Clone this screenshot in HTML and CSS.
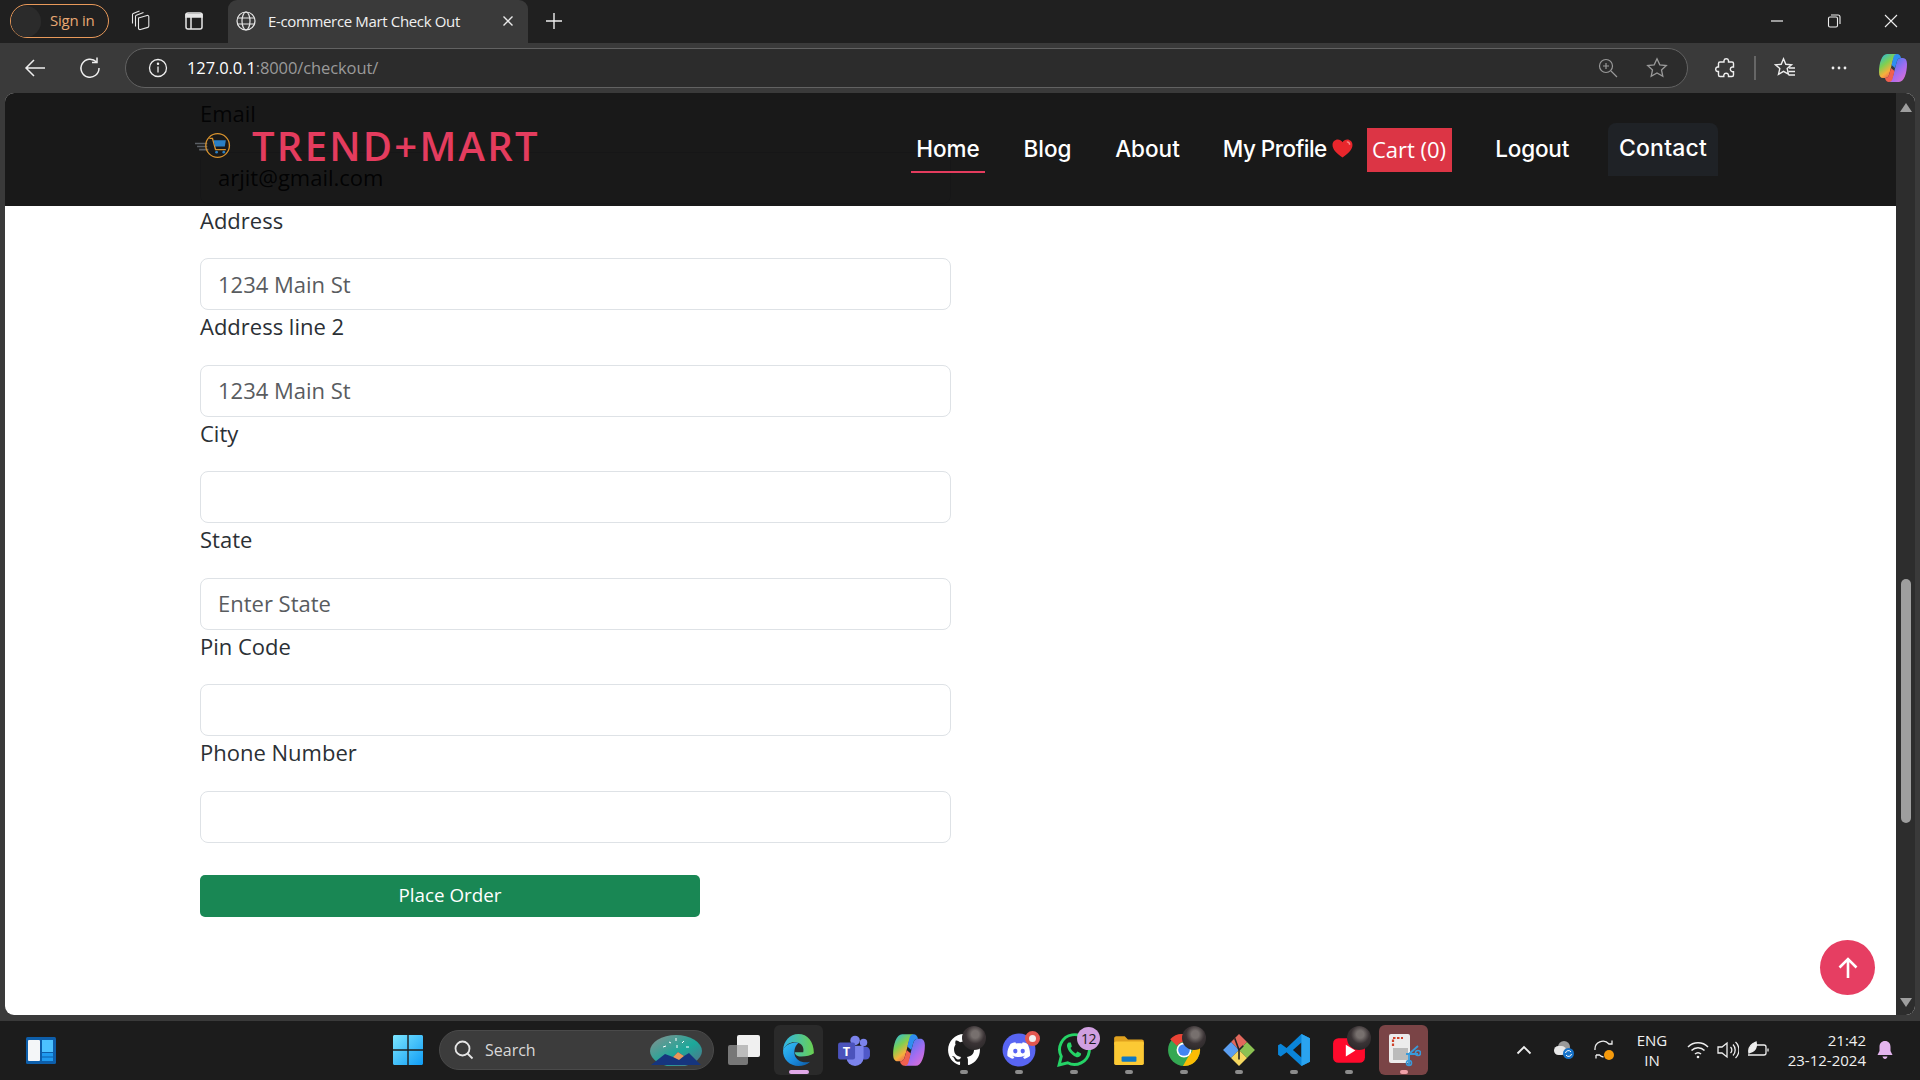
FILE: index.html
```html
<!DOCTYPE html>
<html lang="en">
<head>
<meta charset="utf-8">
<title>E-commerce Mart Check Out</title>
<link rel="stylesheet" href="styles.css">
</head>
<body>
<svg class="defs" width="0" height="0" aria-hidden="true">
  <defs>
    <linearGradient id="gEdge" x1="0" y1="0" x2="1" y2="1"><stop offset="0" stop-color="#35c1f1"/><stop offset=".55" stop-color="#1b8ee0"/><stop offset="1" stop-color="#0c59a4"/></linearGradient>
    <linearGradient id="gEdge2" x1="0" y1="0" x2="1" y2="0"><stop offset="0" stop-color="#2fb5e8"/><stop offset="1" stop-color="#6ad04f"/></linearGradient>
    <linearGradient id="gCop" x1="0" y1="0" x2=".6" y2="1"><stop offset="0" stop-color="#1fb6f0"/><stop offset=".45" stop-color="#7fd050"/><stop offset=".75" stop-color="#f7b03c"/><stop offset="1" stop-color="#ee5a5a"/></linearGradient>
    <linearGradient id="gCop2" x1=".2" y1="0" x2="1" y2="1"><stop offset="0" stop-color="#3a7cf0"/><stop offset=".55" stop-color="#a86cf0"/><stop offset="1" stop-color="#ea70cc"/></linearGradient>
    <linearGradient id="gWin" x1="0" y1="0" x2="1" y2="1"><stop offset="0" stop-color="#7ce6ff"/><stop offset="1" stop-color="#0f9cf5"/></linearGradient>
    <linearGradient id="gSky" x1="0" y1="0" x2="1" y2="1"><stop offset="0" stop-color="#8b8f8e"/><stop offset=".55" stop-color="#1ba89a"/><stop offset="1" stop-color="#5d6a85"/></linearGradient>
  </defs>
</svg>

<div class="tabbar">
  <div class="signin"><span class="avatar"></span><span class="signin-text">Sign in</span></div>
  <svg class="tb-ico ico-coll" viewBox="0 0 24 24" fill="none" stroke="#e6e6e6" stroke-width="1.100"><path d="M9.500 9 18 6.500c1-.3 1.800.3 1.800 1.300V17c0 .7-.4 1.200-1 1.400l-7.300 2.100c-1 .3-2-.3-2-1.300z"/><path d="M6.500 17.500V7.500c0-.6.3-1 .8-1.200L14.500 3.500"/><path d="M3.500 14.500V5.500c0-.5.3-.9.700-1.100L10.500 2"/></svg>
  <svg class="tb-ico ico-vtab" viewBox="0 0 20 20" fill="none" stroke="#e6e6e6" stroke-width="1.500"><rect x="2" y="2" width="16" height="16" rx="2"/><path d="M7 6v12" /><path d="M2 3.500h16v2.500H2z" fill="#e6e6e6"/></svg>
  <div class="tab">
    <svg class="globe" viewBox="0 0 20 20" fill="none" stroke="#e8e8e8" stroke-width="1.200"><circle cx="10" cy="10" r="9"/><ellipse cx="10" cy="10" rx="4" ry="9"/><path d="M1.600 7h16.800M1.600 13h16.800"/></svg>
    <span class="tab-title">E-commerce Mart Check Out</span>
    <svg class="tab-x" viewBox="0 0 12 12" stroke="#eaeaea" stroke-width="1.400"><path d="M1.500 1.500l9 9M10.500 1.500l-9 9"/></svg>
  </div>
  <svg class="tab-plus" viewBox="0 0 18 18" stroke="#eee" stroke-width="1.400"><path d="M9 1v16M1 9h16"/></svg>
  <div class="winctl">
    <svg viewBox="0 0 14 14" stroke="#eee" stroke-width="1.200" fill="none"><path d="M1 7h12"/></svg>
    <svg viewBox="0 0 14 14" stroke="#eee" stroke-width="1.100" fill="none"><rect x="1.500" y="3" width="9" height="10" rx="1.500"/><path d="M4 1h7c1.200 0 2 .8 2 2v7"/></svg>
    <svg viewBox="0 0 14 14" stroke="#eee" stroke-width="1.100" fill="none"><path d="M1 1l12 12M13 1L1 13"/></svg>
  </div>
</div>

<div class="toolbar">
  <svg class="tool-ico ico-back" viewBox="0 0 22 22" fill="none" stroke="#eee" stroke-width="1.500"><path d="M21 11H2M10 3l-8 8 8 8"/></svg>
  <svg class="tool-ico ico-reload" viewBox="0 0 22 22" fill="none" stroke="#eee" stroke-width="1.500"><path d="M17.500 5A9 9 0 1 0 20 11"/><path d="M18 .5V5.500h-5"/></svg>
  <div class="urlbar">
    <svg class="ico-info" viewBox="0 0 20 20" fill="none" stroke="#eee" stroke-width="1.300"><circle cx="10" cy="10" r="8.500"/><path d="M10 8.500v6"/><circle cx="10" cy="5.800" r=".6" fill="#eee"/></svg>
    <span class="url"><span class="url-host">127.0.0.1</span>:8000/checkout/</span>
    <svg class="ico-zoom" viewBox="0 0 20 20" fill="none" stroke="#999" stroke-width="1.200"><circle cx="8" cy="8" r="6.500"/><path d="M8 5v6M5 8h6M13 13l6 6"/></svg>
    <svg class="ico-star" viewBox="0 0 22 22" fill="none" stroke="#999" stroke-width="1.300"><path d="M11 1.800l2.800 6 6.500.7-4.800 4.400 1.300 6.400L11 16l-5.800 3.300 1.300-6.400L1.700 8.500l6.500-.7z"/></svg>
  </div>
  <svg class="tool-ico ico-puzzle" viewBox="0 0 22 22" fill="none" stroke="#eee" stroke-width="1.400"><path d="M9 3.500a2.300 2.300 0 0 1 4.500 0V5h3.500c.8 0 1.500.7 1.500 1.500V10h-1.300a2.400 2.400 0 0 0 0 4.700h1.300v3.300c0 .8-.7 1.500-1.500 1.500h-3.500v-1.300a2.400 2.400 0 0 0-4.700 0v1.300H5c-.8 0-1.500-.7-1.500-1.500v-3.500h-1a2.300 2.300 0 0 1 0-4.500h1V6.500C3.500 5.700 4.200 5 5 5h4z"/></svg>
  <span class="tool-sep"></span>
  <svg class="tool-ico ico-fav" viewBox="0 0 22 22" fill="none" stroke="#eee" stroke-width="1.400"><path d="M9.500 1.800l2.300 5.500 5.700.5-4.300 3.800 1.200 5.600-4.900-2.800-5 2.900 1.300-5.700L1.500 7.800l5.700-.5z" /><path d="M15 11h6M14.500 14.500h6.500M14.500 18h6.500"/></svg>
  <svg class="tool-ico ico-dots" viewBox="0 0 20 20" fill="#eee"><circle cx="4" cy="10" r="1.400"/><circle cx="10" cy="10" r="1.400"/><circle cx="16" cy="10" r="1.400"/></svg>
  <svg class="ico-copilot" viewBox="0 0 28 30"><path d="M8 1h10c-2 1-3 3-4 6l-4 15c-.6 2-2 3-4 3H4c-2.500 0-4-2-4-6C0 10 3 1 8 1z" fill="url(#gCop)"/><path d="M20 29H10c2-1 3-3 4-6l4-15c.6-2 2-3 4-3h2c2.500 0 4 2 4 6 0 9-3 18-8 18z" fill="url(#gCop2)"/><path d="M18 1c2 0 3.500 1.500 4 4-2 0-3.400 1-4 3l-2 7-3.500-3L14.500 4c.4-2 2-3 3.500-3z" fill="#2f8ef0"/><path d="M10 29c-2 0-3.500-1.500-4-4 2 0 3.400-1 4-3l2-7 3.500 3L13.500 26c-.4 2-2 3-3.500 3z" fill="#f0604f"/></svg>
</div>

<main class="viewport">
  <div class="scroller">
    <form class="checkout">
      <label class="flabel">Email</label>
      <input class="finput" type="text" value="arjit@gmail.com">
      <label class="flabel">Address</label>
      <input class="finput" type="text" placeholder="1234 Main St">
      <label class="flabel">Address line 2</label>
      <input class="finput" type="text" placeholder="1234 Main St">
      <label class="flabel">City</label>
      <input class="finput" type="text">
      <label class="flabel">State</label>
      <input class="finput" type="text" placeholder="Enter State">
      <label class="flabel">Pin Code</label>
      <input class="finput" type="text">
      <label class="flabel">Phone Number</label>
      <input class="finput" type="text">
      <button class="place" type="button">Place Order</button>
    </form>
    <div class="scrollbar">
      <span class="sb-up"></span>
      <span class="sb-track"><span class="sb-thumb"></span></span>
      <span class="sb-down"></span>
    </div>
  </div>

  <header class="site-header">
    <a class="logo">
      <svg class="logo-ico" viewBox="0 0 36 28" fill="none">
        <path d="M0 12h12M2 15h10M4 18h9" stroke="#5b6066" stroke-width="1.500"/>
        <circle cx="22" cy="14" r="11.500" stroke="#d9932e" stroke-width="1.300"/>
        <path d="M14 7h3l3 11h10" stroke="#d9932e" stroke-width="1.300"/>
        <path d="M18 9h12l-1 6H19.500z" fill="#2a7fc4"/>
        <circle cx="21" cy="20.500" r="1.300" fill="#2a7fc4"/><circle cx="28" cy="20.500" r="1.300" fill="#2a7fc4"/>
      </svg>
      <span class="logo-text">TREND+MART</span>
    </a>
    <nav class="nav">
      <a class="nav-link w-home is-active">Home</a>
      <a class="nav-link w-blog">Blog</a>
      <a class="nav-link w-about">About</a>
      <a class="nav-link w-profile">My Profile<svg class="heart" viewBox="0 0 22 20"><path d="M11 19.500C5 15 .5 11 .5 6.200 .5 3 3 .5 6 .5c2 0 3.800 1 5 3 1.200-2 3-3 5-3 3 0 5.500 2.500 5.500 5.700C21.500 11 17 15 11 19.500z" fill="#e8262c"/><path d="M15.500 3c1.500 0 3 1.200 3 3" stroke="#f98a8a" stroke-width="1.500" fill="none"/></svg></a>
      <a class="nav-cart">Cart (0)</a>
      <a class="nav-link w-logout">Logout</a>
      <a class="nav-contact">Contact</a>
    </nav>
  </header>

  <button class="to-top" type="button" aria-label="Back to top">
    <svg viewBox="0 0 24 24" fill="none" stroke="#fff" stroke-width="2.600"><path d="M12 22V3M3.500 11.500 12 3l8.500 8.500"/></svg>
  </button>
</main>

<footer class="taskbar">
  <svg class="widget" viewBox="0 0 30 27"><rect width="30" height="27" rx="1.500" fill="#0d5eaa"/><rect x="2" y="3" width="12" height="21" rx="1" fill="#f4f6f8"/><rect x="16" y="3" width="11" height="12" fill="#4cc2ff"/><rect x="16" y="16" width="11" height="3.500" fill="#1f9bf0"/><rect x="16" y="20.500" width="11" height="3.500" fill="#1f9bf0"/></svg>
  <div class="task-center">
    <svg class="winlogo" viewBox="0 0 30 30"><path d="M0 1.500C0 .7.700 0 1.500 0H14.300v14.300H0zM15.700 0h12.800c.8 0 1.500.7 1.500 1.500v12.800H15.700zM0 15.700h14.300V30H1.500C.7 30 0 29.300 0 28.500zM15.700 15.700H30v12.800c0 .8-.7 1.500-1.500 1.500H15.700z" fill="url(#gWin)"/></svg>
    <div class="searchbox">
      <svg class="search-ico" viewBox="0 0 20 20" fill="none" stroke="#e6e6e6" stroke-width="1.800"><circle cx="8.500" cy="8.500" r="7"/><path d="M13.500 13.500l5 5"/></svg>
      <span class="search-text">Search</span>
      <svg class="bing" viewBox="0 0 54 32"><ellipse cx="27" cy="17" rx="26" ry="16" fill="url(#gSky)"/><path d="M2 31 16 20l8 3 5-5 6 4 5-3 12 12z" fill="#16357e"/><path d="M24 23l5-5 6 4-5 4z" fill="#e9985a"/><path d="M20 8l2 1M27 4v3M35 7l-2 2M14 13l3-1M40 13l-3 0M28 11v3" stroke="#fff" stroke-width="1"/></svg>
    </div>
    <svg class="taskview" viewBox="0 0 32 30"><rect x="0" y="10" width="20" height="20" rx="2" fill="#777"/><rect x="9" y="0" width="23" height="22" rx="2" fill="#f0f0f0"/><rect x="9" y="10" width="11" height="12" fill="#bcbcbc"/></svg>

    <div class="slot slot-active">
      <svg viewBox="0 0 32 32"><path d="M30 19C30 8 24 1 15.500 1 7 1 1.500 8 1 16c3-6 8-8 13-7 5 .9 7 5 6 9h-8c0 2 2 4 6 4 5 0 9-1 12-3z" fill="url(#gEdge2)"/><path d="M1 16c-.6 9 6.500 15 14.500 15 4 0 8-1 11-4-7 2-13-1-14.500-6-1-4 0-9 4-12-7-.5-13 2-15 7z" fill="url(#gEdge)"/></svg>
      <span class="pip pip-pink"></span>
    </div>
    <div class="slot">
      <svg viewBox="0 0 32 32"><circle cx="25" cy="9" r="3.500" fill="#7b83eb"/><rect x="19" y="13" width="12" height="12" rx="4" fill="#5059c9"/><circle cx="17" cy="7" r="4.500" fill="#7b83eb"/><path d="M9 12h16v11a8 8 0 0 1-16 0z" fill="#7b83eb"/><rect x="1" y="9" width="16" height="16" rx="2" fill="#4b53bc"/><text class="t-letter" x="9" y="21.500">T</text></svg>
    </div>
    <div class="slot">
      <svg viewBox="0 0 28 30"><path d="M8 1h10c-2 1-3 3-4 6l-4 15c-.6 2-2 3-4 3H4c-2.500 0-4-2-4-6C0 10 3 1 8 1z" fill="url(#gCop)"/><path d="M20 29H10c2-1 3-3 4-6l4-15c.6-2 2-3 4-3h2c2.500 0 4 2 4 6 0 9-3 18-8 18z" fill="url(#gCop2)"/><path d="M18 1c2 0 3.500 1.500 4 4-2 0-3.400 1-4 3l-2 7-3.500-3L14.500 4c.4-2 2-3 3.500-3z" fill="#2f8ef0"/><path d="M10 29c-2 0-3.500-1.500-4-4 2 0 3.400-1 4-3l2-7 3.500 3L13.500 26c-.4 2-2 3-3.500 3z" fill="#f0604f"/></svg>
    </div>
    <div class="slot">
      <svg viewBox="0 0 32 32"><path d="M16 1C7.700 1 1 7.700 1 16c0 6.600 4.300 12.200 10.300 14.200.8.100 1-.3 1-.7v-2.600c-4.200.9-5-2-5-2-.7-1.700-1.700-2.200-1.700-2.200-1.400-.9.100-.9.100-.9 1.500.1 2.300 1.500 2.300 1.500 1.300 2.300 3.500 1.600 4.400 1.200.1-1 .5-1.600 1-2-3.300-.4-6.800-1.700-6.800-7.400 0-1.600.6-3 1.500-4-.2-.4-.7-1.900.1-4 0 0 1.300-.4 4.100 1.500a14 14 0 0 1 7.500 0c2.800-1.900 4.100-1.500 4.100-1.500.8 2.100.3 3.600.1 4 1 1 1.500 2.400 1.500 4 0 5.700-3.500 7-6.800 7.400.5.500 1 1.400 1 2.800v4.100c0 .4.200.8 1 .7C26.700 28.200 31 22.600 31 16 31 7.700 24.300 1 16 1z" fill="#fff"/></svg>
      <span class="face"></span><span class="pip"></span>
    </div>
    <div class="slot">
      <svg viewBox="0 0 32 32"><circle cx="16" cy="16" r="15.500" fill="#5865f2"/><path d="M24 10c-1.500-.7-3-1.200-4.500-1.400l-.6 1.200c-1.900-.3-3.800-.3-5.700 0l-.6-1.200c-1.500.2-3 .7-4.500 1.400-2.600 4-3.400 7.800-3 11.600 1.800 1.400 3.600 2.200 5.400 2.700l1.200-1.800-1.800-.9.400-.3c3.500 1.600 7.300 1.600 10.800 0l.4.300-1.800.9 1.200 1.800c1.800-.5 3.600-1.300 5.400-2.700.5-4.400-.8-8.200-2.300-11.600z" fill="#fff"/><ellipse cx="12.500" cy="17" rx="2" ry="2.200" fill="#5865f2"/><ellipse cx="19.500" cy="17" rx="2" ry="2.200" fill="#5865f2"/></svg>
      <span class="dot-badge"></span><span class="pip"></span>
    </div>
    <div class="slot">
      <svg viewBox="0 0 32 32" fill="none"><path d="M2 30l2-8A14 14 0 1 1 10 28z" stroke="#25d366" stroke-width="2.800"/><path d="M11 9c-1 .5-2 2-1.500 4 1 4 4.500 8 8.500 9.500 2 .7 3.800-.4 4.500-1.800l.2-1.500-3.500-1.700-1.500 1.700c-2-.8-4-2.800-5-5l1.300-1.500L13 9z" fill="#25d366"/></svg>
      <span class="num-badge">12</span><span class="pip"></span>
    </div>
    <div class="slot">
      <svg viewBox="0 0 32 32"><path d="M2 5c0-1 .8-2 2-2h8l3 3h13c1.200 0 2 .8 2 2v3H2z" fill="#e0a11e"/><rect x="2" y="8" width="28" height="22" rx="1.500" fill="#fcc934"/><rect x="9" y="22" width="14" height="5" rx="1" fill="#0f78c4"/></svg>
      <span class="pip"></span>
    </div>
    <div class="slot">
      <svg viewBox="0 0 32 32"><circle cx="16" cy="16" r="15" fill="#34a853"/><path d="M16 1a15 15 0 0 1 13 7.500H16a7.500 7.500 0 0 0-6.500 3.700L3 5.800A15 15 0 0 1 16 1z" fill="#ea4335"/><path d="M29 8.500A15 15 0 0 1 15 31l6.500-11.200A7.500 7.500 0 0 0 22.500 8.500z" fill="#fbbc04"/><circle cx="16" cy="16" r="7" fill="#fff"/><circle cx="16" cy="16" r="5.500" fill="#4285f4"/></svg>
      <span class="face"></span><span class="pip"></span>
    </div>
    <div class="slot">
      <svg viewBox="0 0 32 32"><path d="M16 1l7.500 7.500L16 16 8.500 8.500z" fill="#e2685c"/><path d="M8.500 8.500 16 16l-7.500 7.500L1 16z" fill="#5b9ef0"/><path d="M23.500 8.500 31 16l-7.500 7.500L16 16z" fill="#8cc152"/><path d="M8.500 23.500 16 16l7.500 7.500L16 31z" fill="#f6d860"/><path d="M12 5l4 11 4-4M16 16v9" stroke="#222" stroke-width="1.500" fill="none"/></svg>
      <span class="pip"></span>
    </div>
    <div class="slot">
      <svg viewBox="0 0 32 32"><path d="M23 1l8 4v22l-8 4L9 18l-5.500 4L1 20.500v-9L3.500 10 9 14zM23 9l-8 7 8 7z" fill="#0a85d9"/><path d="M23 1l8 4v22l-8 4z" fill="#2aa3ef"/></svg>
      <span class="pip"></span>
    </div>
    <div class="slot">
      <svg viewBox="0 0 32 32"><rect x="1" y="5" width="30" height="23" rx="5" fill="#ff0a2c"/><path d="M13 11l9 5.500-9 5.500z" fill="#fff"/></svg>
      <span class="face"></span><span class="pip"></span>
    </div>
    <div class="slot slot-snip">
      <svg viewBox="0 0 32 34"><rect x="1" y="1" width="21" height="29" rx="2" fill="#ececec"/><path d="M5 13V5h10" fill="none" stroke="#d0432b" stroke-width="2.200" stroke-dasharray="2.500 1.500"/><rect x="5" y="15" width="15" height="12" fill="#bbb"/><path d="M21 33l0-12 9-8M30 21l-12 0" stroke="#3a9ad9" stroke-width="1.800" fill="none"/><circle cx="21" cy="30" r="2.500" fill="none" stroke="#3a9ad9" stroke-width="1.600"/><circle cx="30" cy="20" r="2.500" fill="none" stroke="#3a9ad9" stroke-width="1.600"/></svg>
      <span class="pip pip-rose"></span>
    </div>
  </div>
  <div class="tray">
    <svg class="tr-chev" viewBox="0 0 16 10" fill="none" stroke="#eee" stroke-width="1.800"><path d="M1.500 8.500 8 2l6.500 6.500"/></svg>
    <svg class="tr-cloud" viewBox="0 0 22 20"><circle cx="11" cy="7" r="6" fill="#9a9a9a"/><rect x="1" y="6" width="12" height="9" rx="4.500" fill="#e8e8e8"/><circle cx="15.500" cy="13.500" r="5.500" fill="#1672c9"/><path d="M12.500 13a3 3 0 0 1 5.500-1M18.500 14a3 3 0 0 1-5.500 1" stroke="#fff" fill="none"/></svg>
    <svg class="tr-sync" viewBox="0 0 22 22" fill="none" stroke="#eee" stroke-width="1.300"><path d="M2 11a8 8 0 0 1 14-6h3M19 1.500V5h-3.500"/><path d="M3 16h3.500a8 8 0 0 0 4 2M3 19.500V16"/><circle cx="16" cy="16" r="5" fill="#f59a0c" stroke="none"/></svg>
    <div class="lang"><span>ENG</span><span>IN</span></div>
    <svg class="tr-wifi" viewBox="0 0 22 18" fill="none" stroke="#eee" stroke-width="1.500"><path d="M1 6a14 14 0 0 1 20 0M4.500 9.500a9 9 0 0 1 13 0M8 13a4.500 4.500 0 0 1 6 0"/><circle cx="11" cy="16" r="1.300" fill="#eee" stroke="none"/></svg>
    <svg class="tr-vol" viewBox="0 0 22 20" fill="none" stroke="#eee" stroke-width="1.300"><path d="M1 7v6h4l5 4V3L5 7z"/><path d="M13.500 7a4 4 0 0 1 0 6M16 4.500a8 8 0 0 1 0 11M18.500 2a11 11 0 0 1 0 16"/></svg>
    <svg class="tr-batt" viewBox="0 0 22 20" fill="none" stroke="#eee" stroke-width="1.300"><path d="M8 5h9c1 0 2 .8 2 2v6c0 1-1 2-2 2H1"/><path d="M21 8.500v3"/><path d="M2 13c-1-5 2-9 7-11 1 4 0 9-5 10z" fill="#eee"/></svg>
    <div class="clock"><span>21:42</span><span>23-12-2024</span></div>
    <svg class="tr-bell" viewBox="0 0 18 20"><path d="M9 1c-3.500 0-5.500 2.500-5.500 6v4L1.500 15h15l-2-4V7C14.500 3.500 12.500 1 9 1z" fill="#e3b4ee"/><path d="M6.500 16.500h5c-.4 1.500-1.300 2.500-2.500 2.500s-2.100-1-2.500-2.500z" fill="#e3b4ee"/></svg>
  </div>
</footer>
</body>
</html>
```

FILE: styles.css
```css
* { box-sizing: border-box; }
html, body { margin: 0; padding: 0; height: 100%; overflow: hidden; }
body {
  width: 1920px; height: 1080px;
  display: flex; flex-direction: column;
  background: #3a3a3a;
  font-family: "Open Sans", "Noto Sans", sans-serif;
}
.defs { position: absolute; }

/* ---- browser chrome ---- */
.tabbar {
  height: 43px; flex: none;
  background: #202020;
  display: flex; align-items: center;
  padding: 0 0 0 10px;
}
.signin {
  width: 99px; height: 34px; border: 1.5px solid #e8995a; border-radius: 17px;
  display: flex; align-items: center; flex: none; margin-bottom: 1px;
}
.avatar { width: 30px; height: 31px; border-radius: 50%; background: #2b2b2b; flex: none; }
.signin-text { margin: 0 0 2px 9px; color: #e8a873; font: 15px "Open Sans", sans-serif; letter-spacing: -.25px; }
.tb-ico { flex: none; margin-bottom: 1px; }
.ico-coll { width: 24px; height: 24px; margin-left: 20px; }
.ico-vtab { width: 20px; height: 20px; margin-left: 31px; }
.tab {
  width: 300px; height: 43px; margin-left: 24px; flex: none;
  background: #3a3a3a; border-radius: 9px 9px 0 0;
  display: flex; align-items: center; padding: 0 14px 1px 8px;
}
.globe { width: 20px; height: 20px; flex: none; }
.tab-title { margin-left: 12px; color: #f0f0f0; font: 15px "Open Sans", sans-serif; letter-spacing: -.35px; white-space: nowrap; flex: 1; }
.tab-x { width: 12px; height: 12px; flex: none; }
.tab-plus { width: 18px; height: 18px; margin-left: 17px; flex: none; margin-bottom: 1px; }
.winctl { margin-left: auto; display: flex; align-items: center; gap: 43px; padding: 0 22px 1px 0; }
.winctl svg { width: 14px; height: 14px; }

.toolbar {
  height: 50px; flex: none;
  background: #3a3a3a;
  display: flex; align-items: center;
  padding: 0 0 0 24px;
}
.tool-ico { flex: none; }
.ico-back { width: 22px; height: 22px; }
.ico-reload { width: 22px; height: 22px; margin-left: 33px; }
.urlbar {
  width: 1563px; height: 40px; margin-left: 24px; flex: none;
  background: #2c2c2c; border: 1.500px solid #626262; border-radius: 20px;
  display: flex; align-items: center; padding: 0 19px 0 22px;
}
.ico-info { width: 20px; height: 20px; flex: none; }
.url { margin: 0 0 2px 19px; font: 16.500px "Open Sans", sans-serif; color: #9a9a9a; letter-spacing: -.1px; flex: 1; }
.url-host { color: #fff; }
.ico-zoom { width: 20px; height: 20px; flex: none; margin-right: 28px; }
.ico-star { width: 22px; height: 22px; flex: none; }
.ico-puzzle { width: 22px; height: 22px; margin-left: 27px; }
.tool-sep { width: 1.500px; height: 24px; background: #666; margin-left: 17px; flex: none; }
.ico-fav { width: 22px; height: 22px; margin-left: 18px; }
.ico-dots { width: 20px; height: 20px; margin-left: 33px; }
.ico-copilot { width: 28px; height: 30px; margin-left: 30px; flex: none; }

/* ---- page viewport ---- */
.viewport {
  position: relative; flex: none;
  height: 922px; margin: 0 5px 6px 5px;
  background: #fff; border-radius: 9px; overflow: hidden;
}
.scroller { display: flex; height: 100%; }
.checkout {
  width: 1891px; flex: none;
  padding: 5px 0 0 195px;
  display: flex; flex-direction: column; align-items: flex-start;
}
.flabel {
  font-size: 22px; line-height: 30px; color: #2b3035;
  margin-bottom: 23.500px;
}
.finput {
  display: block; width: 751px; height: 52px; flex: none; margin-bottom: 1px;
  border: 1.500px solid #dee2e6; border-radius: 8px;
  padding: 0 17px 1px; background: #fff; outline: none;
  font: 22px "Open Sans", sans-serif; color: #212529;
}
.finput::placeholder { color: #595c5f; opacity: 1; }
.place {
  width: 500px; height: 42px; margin-top: 31px;
  background: #198754; border: 0; border-radius: 5px; color: #fff;
  font: 500 18.800px "Open Sans", sans-serif; padding: 0 0 2px;
}
.scrollbar {
  width: 19px; flex: none; background: #2d2d2d;
  display: flex; flex-direction: column; align-items: center;
  padding: 10px 0 8px;
}
.sb-up, .sb-down { width: 0; height: 0; border-left: 6px solid transparent; border-right: 6px solid transparent; flex: none; }
.sb-up { border-bottom: 9px solid #9e9e9e; }
.sb-down { border-top: 9px solid #9e9e9e; }
.sb-track { flex: 1; width: 100%; display: flex; justify-content: center; padding-top: 467px; }
.sb-thumb { width: 10px; height: 244px; background: #9e9e9e; border-radius: 5px; }

.site-header {
  position: absolute; left: 0; top: 0; width: 1891px; height: 113px;
  background: rgba(0, 0, 0, .9);
  display: flex; align-items: center; justify-content: space-between;
  padding: 0 178px 0 190px;
}
.logo { display: flex; align-items: center; margin-top: -8px; }
.logo-ico { width: 37px; height: 29px; margin-top: -1px; flex: none; }
.logo-text {
  margin-left: 20px; color: #e43c5e;
  font: 600 40px/1 "Open Sans", sans-serif; letter-spacing: 2.250px; white-space: nowrap;
}
.nav { display: flex; align-items: center; gap: 34px; }
.nav-link {
  position: relative; display: flex; align-items: center; justify-content: center; height: 53px; padding: 0 0 3px;
  color: #fff; font: 500 22.500px "Inter", sans-serif; white-space: nowrap;
}
.w-home { width: 74px; }
.w-blog { width: 57px; }
.w-about { width: 75px; }
.w-profile { width: 137.500px; letter-spacing: -.5px; }
.w-logout { width: 83.500px; letter-spacing: -.2px; }
.is-active::after { content: ""; position: absolute; left: 0; right: 0; bottom: 3px; height: 2px; background: #e43c5e; }
.heart { width: 21px; height: 19px; margin-left: 5px; flex: none; }
.nav-cart {
  width: 85px; height: 44px; margin: 1px 5px 0 -24px; padding-bottom: 2px;
  display: flex; align-items: center; justify-content: center;
  background: #dc3545; color: #fff; font: 22px "Open Sans", sans-serif; white-space: nowrap;
}
.nav-contact {
  width: 110px; height: 53px; padding-bottom: 3px; border-radius: 8px 8px 0 0; background: #1f2226;
  display: flex; align-items: center; justify-content: center;
  color: #fff; font: 500 23px "Inter", sans-serif; letter-spacing: .2px;
}
.to-top {
  position: absolute; left: 1815px; top: 847px; width: 55px; height: 55px; padding: 0;
  border: 0; border-radius: 50%; background: #e63e62;
  display: flex; align-items: center; justify-content: center;
}
.to-top svg { width: 24px; height: 24px; }

/* ---- taskbar ---- */
.taskbar {
  height: 59px; flex: none; background: #1c1c1c;
  display: flex; align-items: center; position: relative;
  padding: 0 0 1px 26px;
}
.widget { width: 30px; height: 27px; flex: none; }
.task-center { display: flex; align-items: center; margin-left: 337px; flex: none; }
.winlogo { width: 30px; height: 30px; flex: none; }
.searchbox {
  width: 275px; height: 40px; margin-left: 16px; flex: none;
  background: #3c3c3c; border-radius: 20px; border: 1px solid #4a4a4a;
  display: flex; align-items: center; padding: 0 10px 0 14px;
}
.search-ico { width: 20px; height: 20px; flex: none; }
.search-text { margin-left: 11px; color: #d8d8d8; font: 16px "Open Sans", sans-serif; flex: 1; }
.bing { width: 54px; height: 32px; flex: none; }
.taskview { width: 32px; height: 30px; margin-left: 14px; flex: none; }
.slot {
  position: relative; width: 55px; height: 50px; flex: none;
  display: flex; align-items: center; justify-content: center;
}
.slot > svg { width: 34px; height: 34px; }
.slot-active { margin-left: 11px; }
.slot-active::before, .slot-snip::before { content: ""; position: absolute; left: 3px; right: 3px; top: 0; bottom: 0; border-radius: 6px; }
.slot-active::before { background: #2a2a2a; }
.slot-snip::before { background: #7a4446; }
.slot > * { position: relative; }
.pip { position: absolute; left: 50%; bottom: 1px; width: 8px; height: 4px; margin-left: -4px; background: #8c8c8c; border-radius: 2px; }
.pip-pink { width: 20px; margin-left: -10px; background: #e0a8e8; }
.pip-rose { background: #f0a0a8; }
.face { position: absolute; left: 26px; top: 1px; width: 24px; height: 24px; border-radius: 50%; background: radial-gradient(circle at 55% 35%, #77706e 0 18%, #3a3335 45%, #222 100%); }
.dot-badge { position: absolute; left: 34px; top: 6px; box-sizing: content-box; width: 7px; height: 7px; border-radius: 50%; background: #f0f0f0; border: 4px solid #e2574f; }
.num-badge { position: absolute; left: 31px; top: 2px; width: 23px; height: 23px; border-radius: 50%; background: #d09fe0; color: #1a1a1a; font: 14px/23px "Open Sans", sans-serif; text-align: center; letter-spacing: -.5px; }
.t-letter { font: 700 12px "Open Sans", sans-serif; fill: #fff; text-anchor: middle; }

.tray { margin-left: auto; display: flex; align-items: center; flex: none; padding-right: 26px; }
.tr-chev { width: 16px; height: 10px; flex: none; }
.tr-cloud { width: 22px; height: 20px; margin-left: 21px; flex: none; }
.tr-sync { width: 22px; height: 22px; margin-left: 18px; flex: none; }
.lang { width: 48px; margin-left: 13px; color: #f0f0f0; font: 15px/20px "Open Sans", sans-serif; display: flex; flex-direction: column; align-items: center; }
.tr-wifi { width: 22px; height: 18px; margin-left: 11px; flex: none; }
.tr-vol { width: 22px; height: 20px; margin-left: 8px; flex: none; }
.tr-batt { width: 22px; height: 20px; margin-left: 8px; flex: none; }
.clock { margin-left: 8px; width: 89px; color: #f0f0f0; font: 15px/20px "Open Sans", sans-serif; display: flex; flex-direction: column; align-items: flex-end; }
.tr-bell { width: 18px; height: 20px; margin-left: 10px; flex: none; }
```
